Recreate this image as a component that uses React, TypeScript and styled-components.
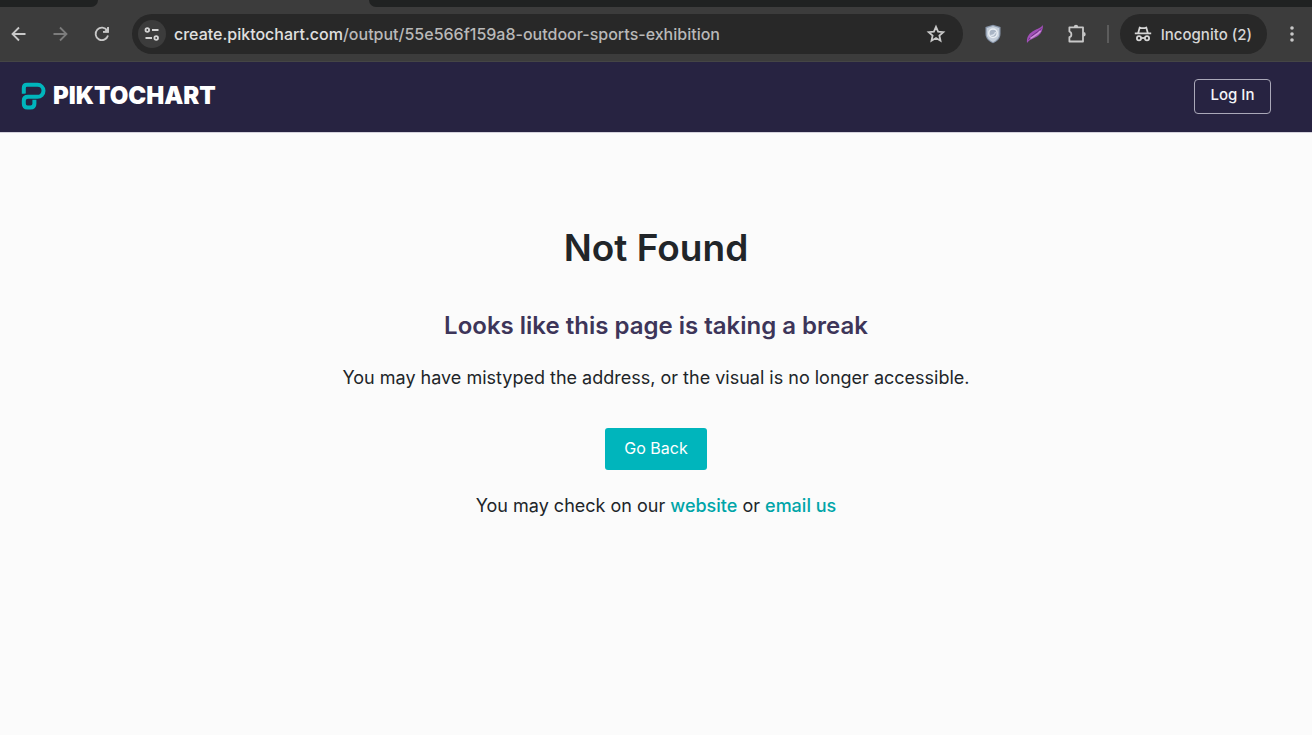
import React from "react";
import styled, { createGlobalStyle } from "styled-components";

const GlobalStyle = createGlobalStyle`
  *, *::before, *::after { box-sizing: border-box; }
  body {
    margin: 0;
    background: #fbfbfb;
    color: #212529;
    font-family: Inter, "Liberation Sans", sans-serif;
  }
  button, input { font: inherit; }
`;

const Chrome = styled.div`
  background: #3c3c3c;
  border-bottom: 1px solid #454545;
`;

const TabStrip = styled.div`
  display: flex;
  height: 7px;
`;

const TabGap = styled.div<{ $side: "left" | "right" }>`
  background: #202222;
  flex: ${(p) => (p.$side === "left" ? "0 0 98px" : "1")};
  border-radius: ${(p) => (p.$side === "left" ? "0 0 10px 0" : "0 0 0 10px")};
`;

const ActiveTab = styled.div`
  flex: 0 0 271px;
`;

const Toolbar = styled.div`
  display: flex;
  align-items: center;
  padding: 7px 8px;
`;

const IconButton = styled.button<{ $dim?: boolean; $gap?: number }>`
  display: flex;
  padding: 0;
  border: 0;
  background: none;
  color: ${(p) => (p.$dim ? "#7c7c7c" : "#c8c8c8")};
  margin-right: ${(p) => p.$gap ?? 0}px;
`;

const AddressBar = styled.div`
  display: flex;
  align-items: center;
  flex: 1;
  min-width: 0;
  height: 40px;
  padding: 0 16px 0 6px;
  border-radius: 20px;
  background: #282828;
  margin-right: 21px;
`;

const SiteInfo = styled.button`
  display: flex;
  align-items: center;
  justify-content: center;
  flex: none;
  width: 28px;
  height: 28px;
  padding: 0;
  border: 0;
  border-radius: 50%;
  background: #3c3c3c;
  color: #d4d4d4;
`;

const Address = styled.div`
  flex: 1;
  min-width: 0;
  margin-left: 8px;
  font-size: 16px;
  font-weight: 500;
  line-height: 20px;
  color: #b9b9b9;
  white-space: nowrap;
  overflow: hidden;
`;

const Host = styled.span`
  color: #e0e0e0;
`;

const Divider = styled.div`
  width: 2px;
  height: 18px;
  margin-right: 11px;
  background: #5c5c5c;
`;

const Incognito = styled.button`
  display: flex;
  align-items: center;
  gap: 9px;
  height: 40px;
  padding: 0 15px 0 14px;
  border: 0;
  border-radius: 20px;
  background: #282828;
  color: #d6d6d6;
  font-size: 15px;
  font-weight: 500;
  white-space: nowrap;
  margin-right: 21px;
`;

const SiteHeader = styled.header`
  display: flex;
  align-items: center;
  justify-content: space-between;
  height: 71px;
  padding: 0 41px 2px 20px;
  background: #272341;
  border-bottom: 1px solid #d4d2dc;
`;

const Brand = styled.a`
  display: flex;
  align-items: center;
  gap: 6px;
  color: #ffffff;
  font-size: 24px;
  font-weight: 900;
  line-height: 28px;
  text-decoration: none;
`;

const LogIn = styled.button`
  width: 77px;
  height: 35px;
  padding: 0 0 3px;
  border: 1px solid #aaa8b8;
  border-radius: 4px;
  background: transparent;
  color: #f4f4f7;
  font-size: 15px;
  font-weight: 500;
`;

const Main = styled.main`
  display: flex;
  flex-direction: column;
  align-items: center;
  padding: 91px 16px 32px;
  text-align: center;
`;

const Title = styled.h1`
  margin: 0;
  font-size: 37px;
  font-weight: 600;
  line-height: 48px;
`;

const Subtitle = styled.h2`
  margin: 38px 0 0;
  color: #3d3559;
  font-size: 24px;
  font-weight: 600;
  line-height: 32px;
`;

const Text = styled.p<{ $top: number }>`
  margin: ${(p) => p.$top}px 0 0;
  font-size: 18px;
  line-height: 28px;
`;

const GoBack = styled.button`
  height: 42px;
  width: 102px;
  margin-top: 36px;
  padding: 0 0 2px;
  border: 0;
  border-radius: 3px;
  background: #00b5bc;
  color: #ffffff;
  font-size: 16px;
`;

const TextLink = styled.a`
  color: #00a5a8;
  font-weight: 500;
  text-decoration: none;
`;

const stroke = { fill: "none", stroke: "currentColor", strokeWidth: 1.8 } as const;

const BackIcon = () => (
  <svg width="22" height="22" viewBox="0 0 22 22" {...stroke} aria-hidden="true">
    <path d="M17.5 11H5M11 4.5L4.5 11L11 17.5" />
  </svg>
);

const ForwardIcon = () => (
  <svg width="22" height="22" viewBox="0 0 22 22" {...stroke} aria-hidden="true">
    <path d="M3.5 11H16M10 4.5L16.5 11L10 17.5" />
  </svg>
);

const ReloadIcon = () => (
  <svg width="22" height="22" viewBox="0 0 22 22" {...stroke} aria-hidden="true">
    <path d="M16.2 7.4A6.3 6.3 0 1 0 17 12.6" />
    <path d="M17.8 3.8V9.6H12Z" fill="currentColor" stroke="none" />
    <path d="M17 4V8.8H12" />
  </svg>
);

const TuneIcon = () => (
  <svg width="16" height="16" viewBox="0 0 16 16" {...stroke} aria-hidden="true">
    <circle cx="3.3" cy="4" r="1.8" />
    <path d="M8 4H14.5M1.5 12H8" />
    <circle cx="12.2" cy="12" r="1.8" />
  </svg>
);

const StarIcon = () => (
  <svg width="22" height="22" viewBox="0 0 22 22" {...stroke} aria-hidden="true">
    <path d="M11 3.8L13.1 8.6L18.3 9.1L14.4 12.6L15.5 17.7L11 15L6.5 17.7L7.6 12.6L3.7 9.1L8.9 8.6Z" />
  </svg>
);

const ShieldIcon = () => (
  <svg width="18" height="20" viewBox="0 0 18 20" aria-hidden="true">
    <path d="M9 .8L16.5 3V10C16.5 14.5 13 17.7 9 19.2C5 17.7 1.5 14.5 1.5 10V3Z" fill="#8795a9" />
    <path d="M9 2L15.3 4V10C15.3 13.8 12.4 16.6 9 18C5.6 16.6 2.7 13.8 2.7 10V4Z" fill="#c4ceda" />
    <circle cx="9" cy="9.2" r="4.2" fill="#a9b5c5" stroke="#e9eef3" strokeWidth="1.5" />
    <path d="M6.5 11C8 12 11 11 11.5 8" fill="none" stroke="#dce3eb" strokeWidth="1.4" />
  </svg>
);

const FeatherIcon = () => (
  <svg width="18" height="20" viewBox="0 0 18 20" aria-hidden="true">
    <path d="M1 19C.5 14 2 10.5 6.5 7.5C10 5 14 4.5 17 1C17 5.5 15.5 9 12.5 11.5C9 14.5 4.5 14.5 1 19Z" fill="#a14fb8" />
    <path d="M2.5 15.5C5.5 11 10.5 9 15.5 4.5" fill="none" stroke="#6b3182" strokeWidth="1" />
    <path d="M4.5 14.3C8 12 12 10.5 14.5 6.8" fill="none" stroke="#cf97da" strokeWidth="1.4" />
  </svg>
);

const PuzzleIcon = () => (
  <svg width="22" height="22" viewBox="0 0 22 22" aria-hidden="true">
    <path
      d="M3.4 4.3H17V18.5H3.4V14.2C6 13.8 6 9 3.4 8.6Z"
      fill="none"
      stroke="currentColor"
      strokeWidth="1.8"
      strokeLinejoin="round"
    />
    <path d="M7.8 4A2.2 2.2 0 0 1 12.2 4ZM17.4 9A2.2 2.2 0 0 1 17.4 13.6Z" fill="currentColor" />
  </svg>
);

const IncognitoIcon = () => (
  <svg width="18" height="18" viewBox="0 0 18 18" {...stroke} aria-hidden="true">
    <path d="M.8 8.3H17.2M4.2 8L5.7 2.6Q9 3.8 12.3 2.6L13.8 8" />
    <circle cx="5" cy="13.2" r="2.1" />
    <circle cx="13" cy="13.2" r="2.1" />
    <path d="M7 13H11" />
  </svg>
);

const MenuIcon = () => (
  <svg width="8" height="20" viewBox="0 0 8 20" fill="currentColor" aria-hidden="true">
    <circle cx="4" cy="4" r="1.8" />
    <circle cx="4" cy="10" r="1.8" />
    <circle cx="4" cy="16" r="1.8" />
  </svg>
);

const BrandMark = () => (
  <svg width="27" height="30" viewBox="0 0 27 30" fill="none" stroke="#00b5bc" strokeWidth="4" aria-hidden="true">
    <path d="M3.8 12.8V7Q3.8 3.8 7 3.8H17.5A5.8 5.8 0 0 1 17.5 15.8H8Q3.8 15.8 3.8 19.5V22.5Q3.8 26.6 7.5 26.6H10.5Q14.4 26.6 14.4 22.8V18.8" />
    <path d="M1.5 15.2Q3.2 13.2 6.5 13" stroke="#272341" strokeWidth="1" />
  </svg>
);

export default function App() {
  return (
    <>
      <GlobalStyle />
      <Chrome>
        <TabStrip>
          <TabGap $side="left" />
          <ActiveTab />
          <TabGap $side="right" />
        </TabStrip>
        <Toolbar>
          <IconButton aria-label="Back" $gap={20}><BackIcon /></IconButton>
          <IconButton aria-label="Forward" $dim $gap={19}><ForwardIcon /></IconButton>
          <IconButton aria-label="Reload" $gap={19}><ReloadIcon /></IconButton>
          <AddressBar>
            <SiteInfo aria-label="Site information"><TuneIcon /></SiteInfo>
            <Address>
              <Host>create.piktochart.com</Host>/output/55e566f159a8-outdoor-sports-exhibition
            </Address>
            <IconButton aria-label="Bookmark this page"><StarIcon /></IconButton>
          </AddressBar>
          <IconButton aria-label="Shield extension" $gap={24}><ShieldIcon /></IconButton>
          <IconButton aria-label="Feather extension" $gap={22}><FeatherIcon /></IconButton>
          <IconButton aria-label="Extensions" $gap={19}><PuzzleIcon /></IconButton>
          <Divider />
          <Incognito>
            <IncognitoIcon />
            Incognito (2)
          </Incognito>
          <IconButton aria-label="Browser menu" $gap={8}><MenuIcon /></IconButton>
        </Toolbar>
      </Chrome>
      <SiteHeader>
        <Brand href="#">
          <BrandMark />
          PIKTOCHART
        </Brand>
        <LogIn>Log In</LogIn>
      </SiteHeader>
      <Main>
        <Title>Not Found</Title>
        <Subtitle>Looks like this page is taking a break</Subtitle>
        <Text $top={22}>You may have mistyped the address, or the visual is no longer accessible.</Text>
        <GoBack>Go Back</GoBack>
        <Text $top={22}>
          You may check on our <TextLink href="#">website</TextLink> or <TextLink href="#">email us</TextLink>
        </Text>
      </Main>
    </>
  );
}
